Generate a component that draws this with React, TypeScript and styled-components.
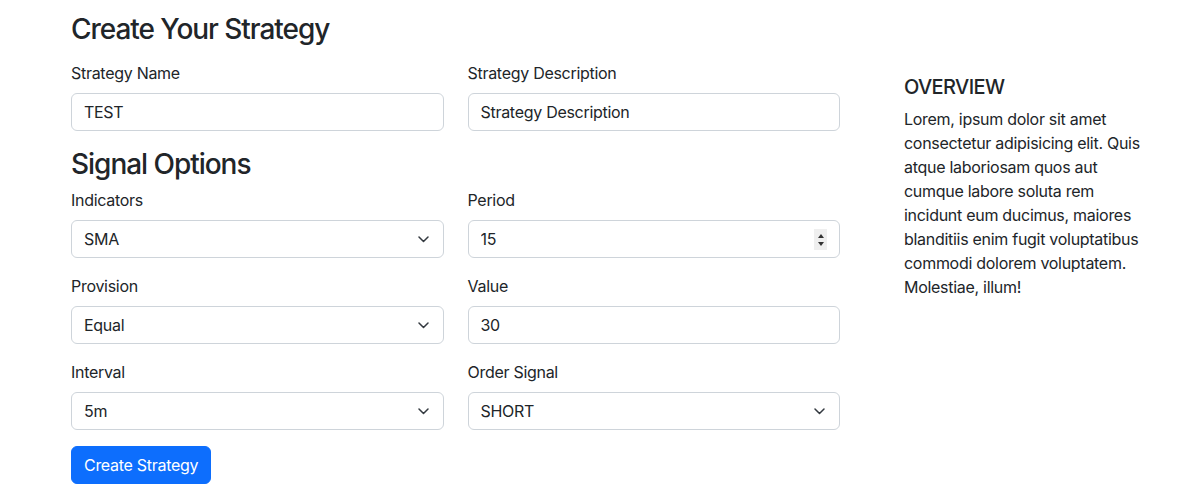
import React from "react";
import styled, { createGlobalStyle } from "styled-components";

const Global = createGlobalStyle`
  * { box-sizing: border-box; }
  body {
    margin: 0;
    background: #fff;
    color: #212529;
    font-family: "Inter", "Liberation Sans", sans-serif;
    font-size: 16px;
    line-height: 1.5;
    letter-spacing: -0.018em;
  }
`;

const Page = styled.div`
  display: grid;
  grid-template-columns: 769px 244px;
  column-gap: 64px;
  padding: 13px 0 0 71px;
`;

const Main = styled.form`
  display: flex;
  flex-direction: column;
`;

const Heading = styled.h3<{ $gap: number; $top?: number }>`
  margin: ${(p) => p.$top ?? 0}px 0 ${(p) => p.$gap}px;
  font-size: 28px;
  font-weight: 500;
  line-height: 1.2;
  letter-spacing: -0.037em;
`;

const Row = styled.div`
  display: grid;
  grid-template-columns: 1fr 1fr;
  column-gap: 24px;
`;

const Field = styled.div`
  display: flex;
  flex-direction: column;
  margin-bottom: 16px;
`;

const Label = styled.label`
  display: block;
  margin-bottom: 8px;
  line-height: 24px;
`;

const Control = styled.input`
  display: block;
  width: 100%;
  height: 38px;
  padding: 6px 12px;
  font: inherit;
  letter-spacing: inherit;
  line-height: 24px;
  color: #212529;
  background: #fff;
  border: 1px solid #ced4da;
  border-radius: 6px;
  outline: none;
`;

const Wrap = styled.div`
  position: relative;
`;

const SelectBox = styled.select`
  display: block;
  width: 100%;
  height: 38px;
  padding: 6px 36px 6px 12px;
  font: inherit;
  letter-spacing: inherit;
  line-height: 24px;
  color: #212529;
  background: #fff;
  border: 1px solid #ced4da;
  border-radius: 6px;
  appearance: none;
  -webkit-appearance: none;
  outline: none;
`;

const Chevron = styled.svg`
  position: absolute;
  right: 15px;
  top: 16px;
  width: 11px;
  height: 7px;
  pointer-events: none;
`;

const Spinner = styled.div`
  position: absolute;
  right: 13px;
  top: 9px;
  width: 13px;
  height: 21px;
  background: #efefef;
  display: flex;
  flex-direction: column;
  align-items: center;
  justify-content: center;
  gap: 4px;
  pointer-events: none;
`;

const Tri = styled.span<{ $down?: boolean }>`
  width: 0;
  height: 0;
  border-left: 3.5px solid transparent;
  border-right: 3.5px solid transparent;
  ${(p) =>
    p.$down
      ? "border-top: 4px solid #333;"
      : "border-bottom: 4px solid #333;"}
`;

const Button = styled.button`
  align-self: flex-start;
  height: 38px;
  padding: 6px 12px;
  font: inherit;
  letter-spacing: inherit;
  line-height: 24px;
  color: #fff;
  background: #0d6efd;
  border: 1px solid #0d6efd;
  border-radius: 6px;
  cursor: pointer;
`;

const Aside = styled.aside`
  padding-top: 62px;
`;

const AsideTitle = styled.h5`
  margin: 0 0 8px;
  font-size: 20px;
  font-weight: 500;
  line-height: 24px;
  letter-spacing: -0.03em;
`;

const Text = styled.p`
  margin: 0;
  line-height: 24px;
`;

const Select = ({ value, options }: { value: string; options: string[] }) => (
  <Wrap>
    <SelectBox defaultValue={value}>
      {options.map((o) => (
        <option key={o}>{o}</option>
      ))}
    </SelectBox>
    <Chevron viewBox="0 0 11 7">
      <path
        d="M1 1 5.5 5.5 10 1"
        fill="none"
        stroke="#343a40"
        strokeWidth="1.5"
        strokeLinecap="round"
        strokeLinejoin="round"
      />
    </Chevron>
  </Wrap>
);

export default function App() {
  return (
    <>
      <Global />
      <Page>
        <Main onSubmit={(e) => e.preventDefault()}>
          <Heading $gap={14}>Create Your Strategy</Heading>
          <Row>
            <Field>
              <Label>Strategy Name</Label>
              <Control defaultValue="TEST" />
            </Field>
            <Field>
              <Label>Strategy Description</Label>
              <Control defaultValue="Strategy Description" />
            </Field>
          </Row>
          <Heading $gap={7} $top={1}>Signal Options</Heading>
          <Row>
            <Field>
              <Label>Indicators</Label>
              <Select value="SMA" options={["SMA", "EMA", "RSI"]} />
            </Field>
            <Field>
              <Label>Period</Label>
              <Wrap>
                <Control defaultValue="15" />
                <Spinner>
                  <Tri />
                  <Tri $down />
                </Spinner>
              </Wrap>
            </Field>
          </Row>
          <Row>
            <Field>
              <Label>Provision</Label>
              <Select value="Equal" options={["Equal", "Greater", "Less"]} />
            </Field>
            <Field>
              <Label>Value</Label>
              <Control defaultValue="30" />
            </Field>
          </Row>
          <Row>
            <Field>
              <Label>Interval</Label>
              <Select value="5m" options={["1m", "5m", "15m", "1h"]} />
            </Field>
            <Field>
              <Label>Order Signal</Label>
              <Select value="SHORT" options={["LONG", "SHORT"]} />
            </Field>
          </Row>
          <Button type="submit">Create Strategy</Button>
        </Main>
        <Aside>
          <AsideTitle>OVERVIEW</AsideTitle>
          <Text>
            Lorem, ipsum dolor sit amet consectetur adipisicing elit. Quis atque
            laboriosam quos aut cumque labore soluta rem incidunt eum ducimus,
            maiores blanditiis enim fugit voluptatibus commodi dolorem
            voluptatem. Molestiae, illum!
          </Text>
        </Aside>
      </Page>
    </>
  );
}
